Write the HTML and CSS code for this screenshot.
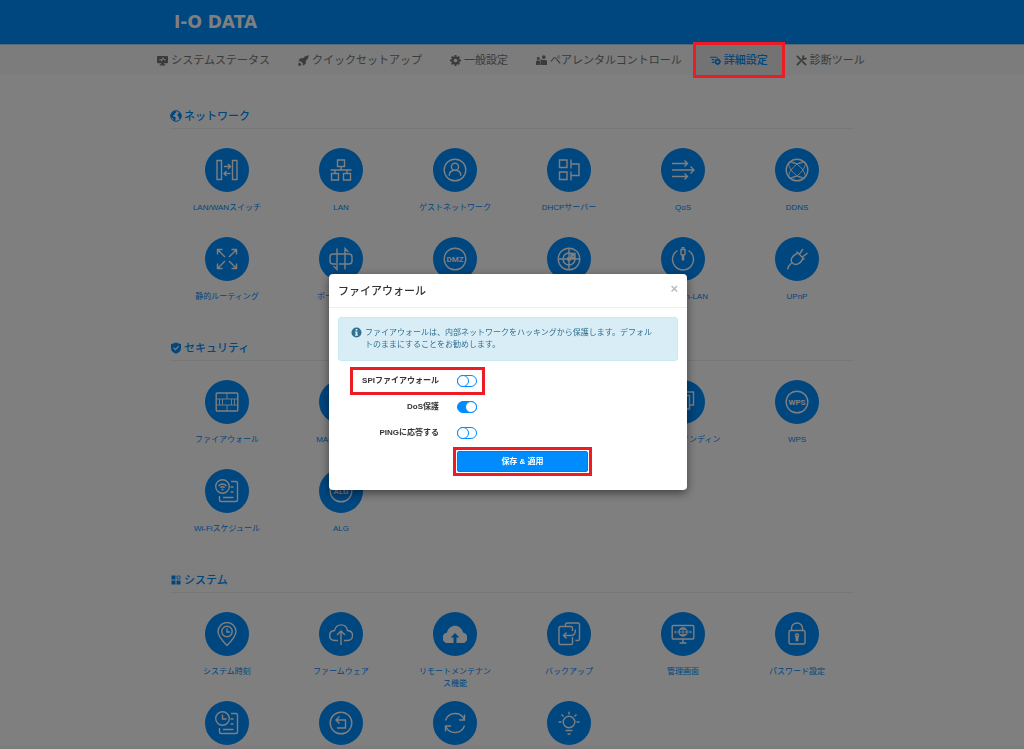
FILE: index.html
```
<!DOCTYPE html>
<html lang="ja">
<head>
  <meta charset="UTF-8">
  <meta name="viewport" content="width=device-width, initial-scale=1">
  <title>詳細設定 - I-O DATA</title>
  <link rel="stylesheet" href="styles.css">
</head>
<body>
  <header class="header">
    <div class="container">
      <a href="#" class="logo">I-O DATA</a>
    </div>
  </header>

  <nav class="navbar">
    <a href="#" class="nav-link">
      <svg class="nav-icon" viewBox="0 0 12 12"><path fill="currentColor" fill-rule="evenodd" d="M1 1h10q1 0 1 1v6q0 1-1 1H7.500v1.200H9V11.500H3v-1.300h1.500V9H1Q0 9 0 8V2q0-1 1-1zM2.500 5.700h1.700l1 1.500 1.300-3.500 1 2h2V4.700H8L6.500 2.300 5 5l-.5-.5h-2z"/></svg>
      システムステータス
    </a>
    <a href="#" class="nav-link">
      <svg class="nav-icon" viewBox="0 0 12 12"><path fill="currentColor" d="M11.800.2Q8 .2 5.500 3.500H2.500L.3 6.700h2.500l2.500 2.500v2.500l3.200-2.200v-3Q11.800 4 11.800.2zM1.500 8Q.2 9 .2 11.800 3 11.800 4 10.500z"/></svg>
      クイックセットアップ
    </a>
    <a href="#" class="nav-link">
      <svg class="nav-icon" viewBox="0 0 12 12"><circle cx="6" cy="6" r="3.200" fill="none" stroke="currentColor" stroke-width="2.400"/><path stroke="currentColor" stroke-width="2.200" d="M6 0v2.500M6 9.500V12M0 6h2.500M9.500 6H12M1.800 1.800l1.700 1.700M8.500 8.500l1.700 1.700M10.200 1.800L8.500 3.500M3.500 8.500l-1.700 1.700"/></svg>
      一般設定
    </a>
    <a href="#" class="nav-link">
      <svg class="nav-icon" viewBox="0 0 12 12"><g fill="currentColor"><circle cx="2.500" cy="3.800" r="1.600"/><path d="M0 11V7.500Q0 6 1.500 6h2Q5 6 5 7.500V11z"/><circle cx="8.500" cy="2.300" r="2"/><path d="M5.500 11V7L4.500 5l1-.5 1.500 1h3.500Q12 5.500 12 7v4z"/></g></svg>
      ペアレンタルコントロール
    </a>
    <a href="#" class="nav-link active marked">
      <svg class="nav-icon" viewBox="0 0 12 12"><path stroke="currentColor" stroke-width="1.200" d="M0 2.500h8M2 5h2.500M2 8h2.500"/><circle cx="8.300" cy="7.300" r="2.300" fill="none" stroke="currentColor" stroke-width="1.800"/><path stroke="currentColor" stroke-width="1.200" d="M8.300 3.600v1.200M8.300 9.800V11M4.600 7.300h1.200M10.800 7.300H12"/></svg>
      詳細設定
    </a>
    <a href="#" class="nav-link">
      <svg class="nav-icon" viewBox="0 0 12 12"><path fill="none" stroke="currentColor" stroke-width="2" stroke-linecap="round" d="M1.500 10.500L8.500 3.500M1.500 1.500l3 3M7.500 7.500l3 3M8 1.200L7.500 4.500l3.300-.5"/></svg>
      診断ツール
    </a>
  </nav>

  <main class="container main">
    <section class="section">
      <h2 class="section-title">
        <svg class="title-icon" viewBox="0 0 12 12"><circle cx="6" cy="6" r="5.300" fill="none" stroke="currentColor" stroke-width="1"/><path fill="currentColor" d="M1 3.500L3.500 1l3 .3-.5 1.500-1.500.7.5 1.300-1.500.2-.7 1.200 2 .3 1 1.500L5 11 4 11.300 3 8.500 1 7zM8 1.200l2.800 2.300.5 3-1.300 2.500-1.200-.5V6.700L7.500 6l.2-2 1.300-.7z"/></svg>
        ネットワーク
      </h2>
      <div class="tiles">
        <a href="#" class="tile">
          <span class="circle"><svg class="icon" viewBox="0 0 24 24"><path d="M2 2.500h4.500v19H2zM17.500 2.500H22v19h-4.500zM9 8.500h6.500M13 6l2.500 2.500L13 11M15.500 15.500H9M11.500 13L9 15.500l2.500 2.500"/></svg></span>
          <span class="tile-label">LAN/WANスイッチ</span>
        </a>
        <a href="#" class="tile">
          <span class="circle"><svg class="icon" viewBox="0 0 24 24"><path d="M8.500 2h7v6.500h-7zM2.500 15.500h7V22h-7zM14.500 15.500h7V22h-7zM12 8.500V12M1.500 12h21M6 12v3.500M18 12v3.500"/></svg></span>
          <span class="tile-label">LAN</span>
        </a>
        <a href="#" class="tile">
          <span class="circle"><svg class="icon" viewBox="0 0 24 24"><circle cx="12" cy="12" r="10.800"/><circle cx="12" cy="8.800" r="3.600"/><path d="M6.200 17.800c0-4 2.500-5.600 5.800-5.600s5.800 1.600 5.800 5.600"/></svg></span>
          <span class="tile-label">ゲストネットワーク</span>
        </a>
        <a href="#" class="tile">
          <span class="circle"><svg class="icon" viewBox="0 0 24 24"><path d="M2.500 2h7.500v7.500H2.500zM2.500 14h7.500v7.500H2.500zM14 1.500v9M14 13.500v9M14 6h8v11.500h-8"/></svg></span>
          <span class="tile-label">DHCPサーバー</span>
        </a>
        <a href="#" class="tile">
          <span class="circle"><svg class="icon" viewBox="0 0 24 24"><path d="M1 5.500h15.500M13.500 2.500l3 3-3 3M1 12h22M19.500 8.500L23 12l-3.500 3.500M1 18.500h15.500M13.500 15.500l3 3-3 3"/></svg></span>
          <span class="tile-label">QoS</span>
        </a>
        <a href="#" class="tile">
          <span class="circle"><svg class="icon" viewBox="0 0 24 24"><circle cx="12" cy="12" r="10.800"/><g stroke-width=".9"><ellipse cx="12" cy="12" rx="10.800" ry="4.500" transform="rotate(45 12 12)"/><ellipse cx="12" cy="12" rx="10.800" ry="4.500" transform="rotate(-45 12 12)"/><path d="M5 3.800q7 4 14 0M5 20.200q7-4 14 0"/></g></svg></span>
          <span class="tile-label">DDNS</span>
        </a>
        <a href="#" class="tile">
          <span class="circle"><svg class="icon" viewBox="0 0 24 24"><path d="M10 10L2.500 2.500M2.500 7.500v-5h5M14 10l7.500-7.500M16.500 2.500h5v5M10 14l-7.500 7.500M2.500 16.500v5h5M14 14l7.500 7.500M16.500 21.500h5v-5"/></svg></span>
          <span class="tile-label">静的ルーティング</span>
        </a>
        <a href="#" class="tile">
          <span class="circle"><svg class="icon" viewBox="0 0 24 24"><path d="M7 17H4q-3 0-3-3v-4q0-3 3-3h16q3 0 3 3v4q0 3-3 3H10M8 1.500v21L4.500 19M16 22.500v-21L19.500 5"/></svg></span>
          <span class="tile-label">ポートの開放</span>
        </a>
        <a href="#" class="tile">
          <span class="circle"><svg class="icon" viewBox="0 0 24 24"><circle cx="12" cy="12" r="10.800"/><text class="icon-text" x="12" y="15">DMZ</text></svg></span>
          <span class="tile-label">DMZ</span>
        </a>
        <a href="#" class="tile">
          <span class="circle"><svg class="icon" viewBox="0 0 24 24"><circle cx="12" cy="12" r="10.800"/><circle cx="12" cy="12" r="6"/><circle cx="12" cy="12" r="1.500"/><path d="M12 1v22M1 12h22M12 12l5-5M14 6.500h4v4h-4z"/></svg></span>
          <span class="tile-label">パススルー</span>
        </a>
        <a href="#" class="tile">
          <span class="circle"><svg class="icon" viewBox="0 0 24 24"><path d="M6.500 3.500a10.500 10.500 0 1 0 11 0M10 2.500h4V7q0 1-1 1h-2q-1 0-1-1zM10.500.8h3"/><path stroke-width="2.600" d="M12 8v5.500"/></svg></span>
          <span class="tile-label">Wake-on-LAN</span>
        </a>
        <a href="#" class="tile">
          <span class="circle"><svg class="icon" viewBox="0 0 24 24"><path d="M2.500 22.500q.5-3.500 4-6.500M11.500 4.500l8 8M18 11c-2 6-7.500 8-10.500 5S7 8.500 13 6M14.500 7l3.500-5M17.500 10l5-4"/></svg></span>
          <span class="tile-label">UPnP</span>
        </a>
      </div>
    </section>

    <section class="section">
      <h2 class="section-title">
        <svg class="title-icon" viewBox="0 0 12 12"><path fill="currentColor" fill-rule="evenodd" d="M6 .5l5 1.700v4Q11 10 6 11.800 1 10 1 6.200v-4zM5.400 8.500l3.800-3.900-.9-.9-2.900 3-1.500-1.500-.9.900z"/></svg>
        セキュリティ
      </h2>
      <div class="tiles">
        <a href="#" class="tile">
          <span class="circle"><svg class="icon" viewBox="0 0 24 24"><rect x="1.200" y="3" width="21.600" height="18" rx="1"/><path stroke-width=".9" d="M1.500 9h21M1.500 15h21M12 3v6M12 15v6M4.500 9v6M7.500 9v6M16.500 9v6M19.500 9v6"/></svg></span>
          <span class="tile-label">ファイアウォール</span>
        </a>
        <a href="#" class="tile">
          <span class="circle"><svg class="icon" viewBox="0 0 24 24"><path d="M2 3h20l-8 9v9l-4-2v-7z"/></svg></span>
          <span class="tile-label">MACフィルタ</span>
        </a>
        <a href="#" class="tile">
          <span class="circle"><svg class="icon" viewBox="0 0 24 24"><circle cx="12" cy="12" r="10.800"/><path d="M4.500 4.500l15 15"/></svg></span>
          <span class="tile-label">URLフィルタ</span>
        </a>
        <a href="#" class="tile">
          <span class="circle"><svg class="icon" viewBox="0 0 24 24"><path d="M12 1.500l9 3.500v7q0 7-9 10.500Q3 19 3 12V5z"/></svg></span>
          <span class="tile-label">アクセス制限</span>
        </a>
        <a href="#" class="tile">
          <span class="circle"><svg class="icon" viewBox="0 0 24 24"><path d="M2 9h13v13H2zM6 9V5.500h12.500V19H15M9.500 5.500V2h13v13h-4"/></svg></span>
          <span class="tile-label">IP/MACバインディング</span>
        </a>
        <a href="#" class="tile">
          <span class="circle"><svg class="icon" viewBox="0 0 24 24"><circle cx="12" cy="12" r="10.800"/><text class="icon-text" x="12" y="15">WPS</text></svg></span>
          <span class="tile-label">WPS</span>
        </a>
        <a href="#" class="tile">
          <span class="circle"><svg class="icon" viewBox="0 0 24 24"><circle cx="7.500" cy="7.500" r="6.800"/><path d="M16 2.500h5q1.500 0 1.500 1.500v17q0 1.500-1.500 1.500H6q-1.500 0-1.500-1.500v-4M15.500 8h3M15.500 13h3M8 18.500h10.500M3.500 7q4-4 8 0M5.300 8.800q2.200-2 4.400 0"/><circle cx="7.500" cy="10.500" r=".4"/></svg></span>
          <span class="tile-label">Wi-Fiスケジュール</span>
        </a>
        <a href="#" class="tile">
          <span class="circle"><svg class="icon" viewBox="0 0 24 24"><circle cx="12" cy="12" r="10.800"/><text class="icon-text" x="12" y="15">ALG</text></svg></span>
          <span class="tile-label">ALG</span>
        </a>
      </div>
    </section>

    <section class="section">
      <h2 class="section-title">
        <svg class="title-icon" viewBox="0 0 12 12"><path fill="currentColor" d="M1.500 1.500h4v4h-4zM1.500 6.500h4v4h-4zM6.500 6.500h4v4h-4z"/><path fill="none" stroke="currentColor" stroke-width=".8" d="M7 2h3v3H7z"/></svg>
        システム
      </h2>
      <div class="tiles">
        <a href="#" class="tile">
          <span class="circle"><svg class="icon" viewBox="0 0 24 24"><path d="M12 23.500q-9-9-9-14a9 9 0 0 1 18 0q0 5-9 14z"/><circle cx="12" cy="9.500" r="5.200"/><path d="M12 6.500v3.500h3"/></svg></span>
          <span class="tile-label">システム時刻</span>
        </a>
        <a href="#" class="tile">
          <span class="circle"><svg class="icon" viewBox="0 0 24 24"><path d="M9 18.500H5.500C-1 18.500-1 9 5.500 8.500 7.500 1 17 1 18.500 8.500 25.500 9 25 18.500 18.500 18.500H15M12 23V9.500M8 13l4-4 4 4"/></svg></span>
          <span class="tile-label">ファームウェア</span>
        </a>
        <a href="#" class="tile">
          <span class="circle"><svg class="icon" viewBox="0 0 24 24"><path class="solid" d="M10.500 21H5C-2 21-2 11.500 4 10.500 6 1.500 18 1.500 20 10.500 26 11.500 26 21 19 21h-5.500v-5.500h2.800L12 11l-4.300 4.500h2.800z"/></svg></span>
          <span class="tile-label">リモートメンテナンス機能</span>
        </a>
        <a href="#" class="tile">
          <span class="circle"><svg class="icon" viewBox="0 0 24 24"><path d="M15.500 9V6q0-1.500-1.500-1.500H3.500Q2 4.500 2 6v15q0 1.500 1.500 1.500H14q1.500 0 1.500-1.500v-6M8.500 4V2.500Q8.500 1 10 1h11q1.500 0 1.500 1.500v14.500q0 1.500-1.500 1.500h-2.500M18.500 7.500q0 6-4.500 6H6.500M9.500 10.500l-3 3 3 3"/></svg></span>
          <span class="tile-label">バックアップ</span>
        </a>
        <a href="#" class="tile">
          <span class="circle"><svg class="icon" viewBox="0 0 24 24"><rect x="1.200" y="3.500" width="21.600" height="13.500" rx="1"/><path d="M12 17v4M8.500 21h7"/><circle cx="12" cy="10" r="4"/><path stroke-width=".8" d="M8 10h8M12 6v8M9 7.500h6M9 12.500h6M7.500 10H3.500M5 8.500L3.500 10 5 11.500M16.500 10h4M19 8.500l1.500 1.500-1.500 1.500"/></svg></span>
          <span class="tile-label">管理画面</span>
        </a>
        <a href="#" class="tile">
          <span class="circle"><svg class="icon" viewBox="0 0 24 24"><rect x="4" y="8.500" width="16" height="13.500" rx="1.500"/><path d="M6.500 8.500V6.500a5.500 5.500 0 0 1 11 0v2M11.300 14.500v4h1.400v-4"/><circle cx="12" cy="13.500" r="1.500"/></svg></span>
          <span class="tile-label">パスワード設定</span>
        </a>
        <a href="#" class="tile" aria-label="スケジュール">
          <span class="circle"><svg class="icon" viewBox="0 0 24 24"><circle cx="7.500" cy="7.500" r="6.800"/><path d="M16 2.500h5q1.500 0 1.500 1.500v17q0 1.500-1.500 1.500H6q-1.500 0-1.500-1.500v-4M15.500 8h3M15.500 13h3M8 18.500h10.500M7.500 3.500V8h4"/></svg></span>
        </a>
        <a href="#" class="tile" aria-label="初期化">
          <span class="circle"><svg class="icon" viewBox="0 0 24 24"><circle cx="12" cy="12" r="10.800"/><path d="M8 17h8.500V9H7.500M10.500 5.500L7 9l3.500 3.500"/></svg></span>
        </a>
        <a href="#" class="tile" aria-label="再起動">
          <span class="circle"><svg class="icon" viewBox="0 0 24 24"><path d="M2.500 9.500a10 10 0 0 1 18.500-1.500M21.500 3.500v5.500H16M21.500 14.500a10 10 0 0 1-18.500 1.500M2.500 20.500V15H8"/></svg></span>
        </a>
        <a href="#" class="tile" aria-label="LED">
          <span class="circle"><svg class="icon" viewBox="0 0 24 24"><circle cx="12" cy="11" r="5.800"/><path d="M8.500 19.500h7M10.500 23h3M12 .8v2.700M1.500 11h3M19.500 11h3M4.500 3.500l2 2M19.500 3.500l-2 2"/></svg></span>
        </a>
      </div>
    </section>
  </main>

  <footer class="footer"></footer>

  <div class="backdrop"></div>

  <div class="modal" role="dialog" aria-modal="true" aria-labelledby="modal-title">
    <div class="modal-dialog">
      <div class="modal-header">
        <h1 class="modal-title" id="modal-title">ファイアウォール</h1>
        <button type="button" class="close" aria-label="閉じる">×</button>
      </div>
      <form class="modal-body">
        <div class="alert">
          <svg class="alert-icon" viewBox="0 0 12 12"><path fill="currentColor" fill-rule="evenodd" d="M6 .5a5.500 5.500 0 1 1 0 11 5.500 5.500 0 0 1 0-11zM5 2.200v1.600h2V2.200zM4.300 4.800v1.100H5v2.600h-.7v1.100h3.400V8.500H7V4.800z"/></svg>
          <p>ファイアウォールは、内部ネットワークをハッキングから保護します。デフォルトのままにすることをお勧めします。</p>
        </div>
        <div class="form-row marked">
          <label for="spi">SPIファイアウォール</label>
          <input type="checkbox" class="switch" id="spi">
        </div>
        <div class="form-row">
          <label for="dos">DoS保護</label>
          <input type="checkbox" class="switch" id="dos" checked>
        </div>
        <div class="form-row">
          <label for="ping">PINGに応答する</label>
          <input type="checkbox" class="switch" id="ping">
        </div>
        <div class="form-action">
          <button type="button" class="btn-save marked">保存 &amp; 適用</button>
        </div>
      </form>
    </div>
  </div>
</body>
</html>
```

FILE: styles.css
```
*,
*::before,
*::after {
  box-sizing: border-box;
}

body {
  margin: 0;
  min-height: 100vh;
  display: flex;
  flex-direction: column;
  background: #fff;
  color: #333;
  font-family: "Liberation Sans", "Noto Sans CJK JP", sans-serif;
  font-size: 8px;
  line-height: 12px;
}

a {
  color: #008cff;
  text-decoration: none;
}

button {
  font-family: inherit;
  cursor: pointer;
}

.container {
  width: 100%;
  max-width: 684px;
  margin: 0 auto;
}

/* Header */
.header {
  background: #008cff;
  border-bottom: 1px solid #b4d2ec;
}

.header .container {
  display: flex;
  align-items: center;
  height: 44px;
  padding: 0 4px;
}

.logo {
  color: #fff;
  font-family: "DejaVu Sans", sans-serif;
  font-size: 17px;
  font-weight: bold;
  line-height: 20px;
}

/* Navigation */
.navbar {
  display: flex;
  justify-content: center;
  padding-right: 2px;
  background: #f8f8f8;
}

.nav-link {
  display: flex;
  align-items: center;
  gap: 3px;
  height: 30px;
  padding: 0 14px;
  color: #777;
  font-size: 11px;
  line-height: 16px;
  white-space: nowrap;
}

.nav-link.active {
  background: #e7e7e7;
  color: #008cff;
  font-weight: 500;
}

.nav-icon {
  width: 11px;
  height: 11px;
}

/* Red frame around the items to operate */
.marked {
  position: relative;
}

.marked::after {
  content: "";
  position: absolute;
  inset: -3px;
  z-index: 30;
  border: 3px solid #ed1c24;
  pointer-events: none;
}

/* Setting tiles */
.main {
  padding-top: 29px;
}

.section + .section {
  margin-top: 21px;
}

.section-title {
  display: flex;
  align-items: center;
  gap: 2px;
  height: 25px;
  margin: 0 0 19px;
  border-bottom: 1px solid #eee;
  color: #008cff;
  font-size: 11px;
  font-weight: 500;
  line-height: 16px;
}

.title-icon {
  width: 12px;
  height: 12px;
}

.tiles {
  display: grid;
  grid-template-columns: repeat(6, 1fr);
  row-gap: 11px;
}

.tile {
  display: flex;
  flex-direction: column;
  align-items: center;
  gap: 10px;
}

.circle {
  display: flex;
  align-items: center;
  justify-content: center;
  width: 44px;
  height: 44px;
  border-radius: 50%;
  background: #008cff;
}

.icon {
  width: 24px;
  height: 24px;
  fill: none;
  stroke: #fff;
  stroke-width: 1.4;
}

.icon .solid {
  fill: #fff;
  stroke: none;
}

.icon-text {
  fill: #fff;
  stroke: none;
  font-family: Roboto, sans-serif;
  font-size: 8px;
  font-weight: bold;
  text-anchor: middle;
}

.tile-label {
  max-width: 78px;
  min-height: 24px;
  text-align: center;
}

.footer {
  flex: 1;
  background: #f8f8f8;
}

/* Modal */
.backdrop {
  position: fixed;
  inset: 0;
  z-index: 10;
  background: rgba(0, 0, 0, 0.5);
}

.modal {
  position: fixed;
  inset: 0;
  z-index: 20;
  padding: 274px 8px 0 0;
}

.modal-dialog {
  max-width: 358px;
  margin: 0 auto;
  border-radius: 4px;
  background: #fff;
  box-shadow: 0 3px 10px rgba(0, 0, 0, 0.5);
}

.modal-header {
  display: flex;
  justify-content: space-between;
  align-items: center;
  height: 34px;
  padding: 0 9px;
  border-bottom: 1px solid #eee;
}

.modal-title {
  margin: 0;
  font-size: 11px;
  font-weight: 500;
  line-height: 16px;
}

.close {
  padding: 0 0 4px;
  border: 0;
  background: none;
  color: #bbb;
  font-size: 13px;
  font-weight: bold;
  line-height: 12px;
}

.modal-body {
  padding: 9px 9px 18px;
}

.alert {
  display: flex;
  gap: 3px;
  margin-bottom: 7px;
  padding: 9px 12px;
  border: 1px solid #c8eaf2;
  border-radius: 3px;
  background: #d9edf7;
  color: #31708f;
}

.alert p {
  flex: 1;
  max-width: 294px;
  margin: 0;
}

.alert-icon {
  flex: none;
  width: 11px;
  height: 11px;
}

.form-row {
  display: grid;
  grid-template-columns: 101px 1fr;
  column-gap: 18px;
  align-items: center;
  height: 26px;
}

.form-row.marked::after {
  inset: -1px auto -1px 12px;
  width: 135px;
}

.form-row label {
  font-weight: bold;
  text-align: right;
}

.switch {
  appearance: none;
  display: flex;
  width: 20px;
  height: 12px;
  margin: 0;
  border: 1px solid #008cff;
  border-radius: 6px;
  background: #fff;
  cursor: pointer;
}

.switch::before {
  content: "";
  flex: none;
  width: 12px;
  height: 12px;
  margin: -1px;
  border: 1px solid #008cff;
  border-radius: 50%;
  background: #fff;
}

.switch:checked {
  justify-content: flex-end;
  background: #008cff;
}

.form-action {
  padding: 5px 0 0 119px;
}

.btn-save {
  display: block;
  width: 131px;
  height: 21px;
  padding: 0;
  border: 1px solid #007ee6;
  border-radius: 2px;
  background: #008cff;
  color: #fff;
  font-size: 8px;
  font-weight: bold;
  line-height: 12px;
}

.btn-save.marked::after {
  inset: -5px;
}
```
